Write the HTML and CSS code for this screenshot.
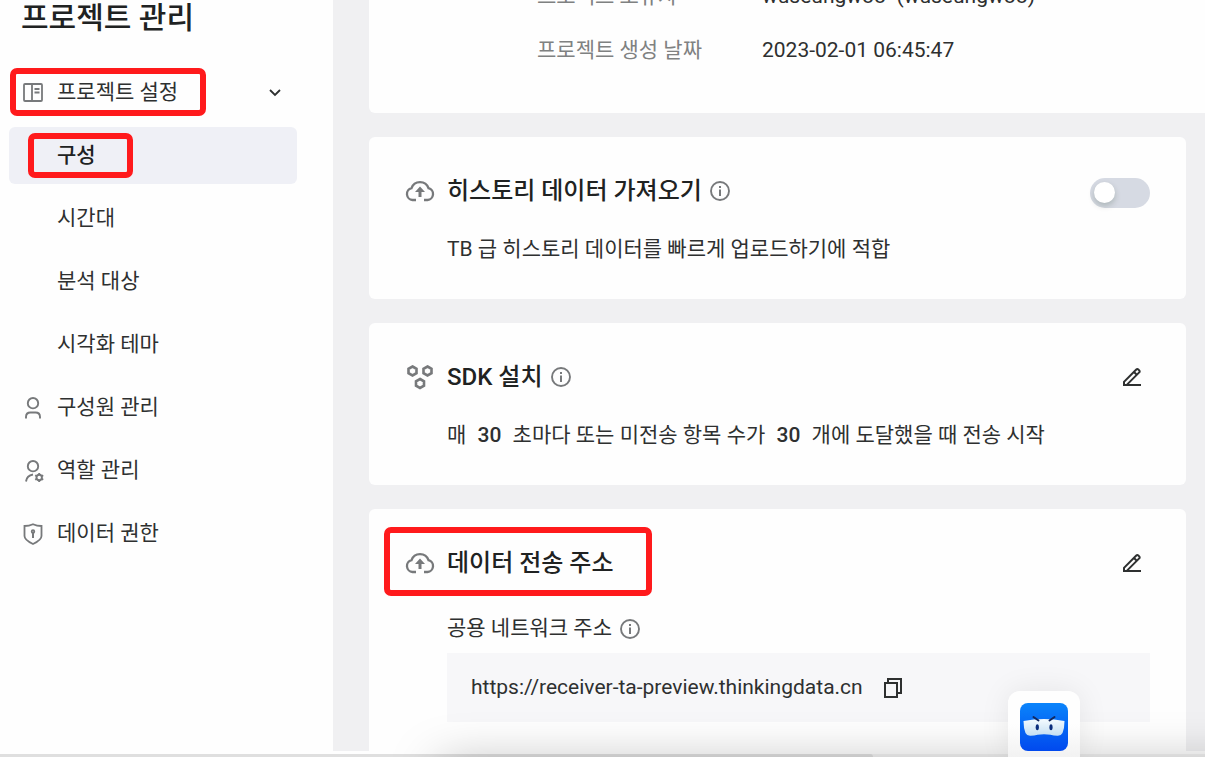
FILE: index.html
```
<!DOCTYPE html>
<html lang="ko">
<head>
    <meta charset="UTF-8">
    <meta name="viewport" content="width=device-width, initial-scale=1.0">
    <title>프로젝트 관리</title>
    <link rel="stylesheet" href="styles.css">
</head>
<body>

    <!-- Shared icons -->
    <svg class="icon-defs" width="0" height="0" aria-hidden="true">
        <symbol id="icon-cloud" viewBox="0 0 30 22">
            <path d="M11 20H7.500a6 6 0 0 1-1-11.800A9 9 0 0 1 23.500 8.200a6 6 0 0 1-1 11.800H19" fill="none" stroke="currentColor" stroke-width="2.300"/>
            <path d="M15 6.500l5 5.500h-3.500v5h-3v-5H10z" fill="currentColor"/>
        </symbol>
        <symbol id="icon-info" viewBox="0 0 20 20">
            <circle cx="10" cy="10" r="9" fill="none" stroke="currentColor" stroke-width="1.900"/>
            <path d="M9 5h2v2H9zM9 8.500h2V15H9z" fill="currentColor"/>
        </symbol>
        <symbol id="icon-edit" viewBox="0 0 20 20">
            <path d="M2 18v-3.200L14.300 2.500q1-1 2 0l.9.9q1 1 0 2L5 17.600M12 5l3 3" fill="none" stroke="currentColor" stroke-width="2"/>
            <path d="M1 17h18v2H1z" fill="currentColor"/>
        </symbol>
    </svg>

    <div class="layout">
        <!-- Sidebar -->
        <aside class="sidebar">
            <h1>프로젝트 관리</h1>
            <nav>
                <ul>
                    <li>
                        <a href="#" class="nav-item">
                            <svg class="nav-icon" viewBox="0 0 22 22" fill="none" stroke="currentColor" stroke-width="1.800"><rect x="2" y="2" width="18" height="17" rx="1"/><path d="M10 2v17M12.500 7h5M12.500 10.500h5"/></svg>
                            <span class="mark mark-settings">프로젝트 설정</span>
                            <svg class="chevron" viewBox="0 0 12 8"><path d="M1 1l5 5 5-5" fill="none" stroke="currentColor" stroke-width="1.800"/></svg>
                        </a>
                    </li>
                    <li><a href="#" class="nav-item sub active"><span class="mark mark-config">구성</span></a></li>
                    <li><a href="#" class="nav-item sub">시간대</a></li>
                    <li><a href="#" class="nav-item sub">분석 대상</a></li>
                    <li><a href="#" class="nav-item sub">시각화 테마</a></li>
                    <li>
                        <a href="#" class="nav-item">
                            <svg class="nav-icon" viewBox="0 0 22 22" fill="none" stroke="currentColor" stroke-width="1.900"><circle cx="11" cy="6.200" r="5.200"/><path d="M4 21.500v-1.500q0-4.500 4.500-4.500h5q4.500 0 4.500 4.500v1.500"/></svg>
                            구성원 관리
                        </a>
                    </li>
                    <li>
                        <a href="#" class="nav-item">
                            <svg class="nav-icon" viewBox="0 0 22 22" fill="none" stroke="currentColor" stroke-width="1.900"><circle cx="11" cy="6.200" r="5.200"/><path d="M4 21.500q.8-6 7-7"/><circle cx="17.200" cy="17.500" r="2.700"/><path d="M17.200 13v2M17.200 20v2M13.200 15.200l1.600 1M19.600 18.800l1.600 1M13.200 19.800l1.600-1M19.600 16.200l1.600-1"/></svg>
                            역할 관리
                        </a>
                    </li>
                    <li>
                        <a href="#" class="nav-item">
                            <svg class="nav-icon" viewBox="0 0 22 22" fill="none" stroke="currentColor" stroke-width="1.800"><path d="M2.500 3Q7 3 11 1.200 15 3 19.500 3v10q0 4-8.500 8Q2.500 17 2.500 13z"/><circle cx="11" cy="8.500" r="1.300"/><path d="M11 9v6" stroke-width="2"/></svg>
                            데이터 권한
                        </a>
                    </li>
                </ul>
            </nav>
        </aside>

        <!-- Main Content -->
        <main class="main-content">
            <section class="card info-card">
                <dl>
                    <dt>프로젝트 소유자</dt>
                    <dd>wuseungwoo&nbsp; (wuseungwoo)</dd>
                    <dt>프로젝트 생성 날짜</dt>
                    <dd>2023-02-01 06:45:47</dd>
                </dl>
            </section>

            <section class="card">
                <div class="card-head">
                    <svg class="card-icon"><use href="#icon-cloud"/></svg>
                    <h2><label for="history">히스토리 데이터 가져오기</label></h2>
                    <svg class="info"><use href="#icon-info"/></svg>
                    <input type="checkbox" id="history" class="switch" role="switch">
                </div>
                <p>TB 급 히스토리 데이터를 빠르게 업로드하기에 적합</p>
            </section>

            <section class="card">
                <div class="card-head">
                    <svg class="card-icon nodes" viewBox="0 0 30 26" fill="none" stroke="currentColor" stroke-width="2.600">
                        <path d="M7.500 2.500l4 2.300v4.400l-4 2.300-4-2.300V4.800zM22.500 2.500l4 2.300v4.400l-4 2.300-4-2.300V4.800zM15 15l4 2.300v4.400L15 24l-4-2.300v-4.400z"/>
                    </svg>
                    <h2>SDK 설치</h2>
                    <svg class="info"><use href="#icon-info"/></svg>
                    <button type="button" class="edit-btn" aria-label="SDK 설치 편집"><svg><use href="#icon-edit"/></svg></button>
                </div>
                <p>매 <b>30</b> 초마다 또는 미전송 항목 수가 <b>30</b> 개에 도달했을 때 전송 시작</p>
            </section>

            <section class="card address-card">
                <div class="card-head mark mark-address">
                    <svg class="card-icon"><use href="#icon-cloud"/></svg>
                    <h2>데이터 전송 주소</h2>
                    <button type="button" class="edit-btn" aria-label="데이터 전송 주소 편집"><svg><use href="#icon-edit"/></svg></button>
                </div>
                <p class="address-label">공용 네트워크 주소 <svg class="info"><use href="#icon-info"/></svg></p>
                <div class="address">
                    <span>https://receiver-ta-preview.thinkingdata.cn</span>
                    <button type="button" class="copy-btn" aria-label="복사">
                        <svg viewBox="0 0 20 22" fill="none" stroke="currentColor" stroke-width="2"><path d="M5 5V2h13v14h-4M2 6h12v14H2z"/></svg>
                    </button>
                </div>
            </section>
        </main>
    </div>

    <!-- Horizontal scrollbar -->
    <div class="scrollbar"><div class="thumb"></div></div>
    <div class="bottom-shadow"></div>

    <!-- Help assistant -->
    <button type="button" class="assistant" aria-label="도우미">
        <svg viewBox="0 0 48 48">
            <defs>
                <linearGradient id="bot-bg" x1="0" y1="0" x2="0" y2="1"><stop offset="0" stop-color="#0a84fb"/><stop offset="1" stop-color="#0149ee"/></linearGradient>
                <linearGradient id="bot-mask" x1="0" y1="0" x2="0" y2="1"><stop offset="0" stop-color="#f4fbff"/><stop offset="1" stop-color="#c3def2"/></linearGradient>
            </defs>
            <rect width="48" height="48" rx="8" fill="url(#bot-bg)"/>
            <path d="M3.500 18Q24 14 44.500 18q0 7-2 12-1.500 3-5 2.800-4 0-7-1-6.500-1.200-13 0-3 1-7 1-3.500.2-5-2.800-2-5-2-12z" fill="url(#bot-mask)"/>
            <path d="M13.500 14l5 3.500M34.500 14l-5 3.500" stroke="#12285e" stroke-width="2" stroke-linecap="round"/>
            <ellipse cx="17.300" cy="24.300" rx="1.600" ry="3" fill="#0a2d7c"/>
            <ellipse cx="31" cy="24.300" rx="1.600" ry="3" fill="#0a2d7c"/>
        </svg>
    </button>

</body>
</html>
```
FILE: styles.css
```
* {
    margin: 0;
    padding: 0;
    box-sizing: border-box;
}

body {
    display: flex;
    flex-direction: column;
    height: 100vh;
    overflow: hidden;
    background-color: #fefefe;
    color: #2e3030;
    font-family: Roboto, "Noto Sans CJK KR", sans-serif;
    font-size: 21px;
    line-height: 33px;
}

button {
    border: none;
    background: none;
    color: inherit;
    cursor: pointer;
}

svg {
    display: block;
    flex-shrink: 0;
}

.icon-defs {
    position: absolute;
}

.layout {
    display: flex;
    flex: 1;
    min-height: 0;
    margin-bottom: 3px;
}

/* Sidebar */
.sidebar {
    width: 333px;
    flex-shrink: 0;
    padding: 0 36px 0 9px;
}

.sidebar h1 {
    padding-left: 12px;
    margin-bottom: 28px;
    font-size: 30px;
    font-weight: 500;
    line-height: 36px;
    color: #202222;
}

.sidebar ul {
    display: flex;
    flex-direction: column;
    gap: 6px;
    list-style: none;
}

.nav-item {
    display: flex;
    align-items: center;
    gap: 13px;
    height: 57px;
    padding: 0 16px 0 13px;
    border-radius: 6px;
    color: inherit;
    text-decoration: none;
}

.nav-item.sub {
    padding-left: 48px;
}

.nav-item.active {
    background-color: #eff0f6;
    color: #202222;
    font-weight: 500;
}

.nav-icon {
    width: 22px;
    height: 22px;
    color: #77797b;
}

.chevron {
    width: 12px;
    height: 8px;
    margin-left: auto;
}

/* Red highlight frames */
.mark {
    position: relative;
}

.mark::after {
    content: "";
    position: absolute;
    box-sizing: border-box;
    border: 6px solid #ff1a1c;
    border-radius: 7px;
    pointer-events: none;
}

.mark-settings::after {
    inset: -8px -28px -7px -47px;
}

.mark-config::after {
    inset: -6px -37px -6px -29px;
}

.mark-address::after {
    top: -18px;
    bottom: -15px;
    left: -21px;
    width: 268px;
}

/* Main Content */
.main-content {
    display: flex;
    flex: 1;
    flex-direction: column;
    gap: 24px;
    min-width: 0;
    padding: 0 19px 0 36px;
    overflow: hidden;
    background-color: #f0f0f2;
}

.card {
    flex-shrink: 0;
    padding: 36px 36px 33px;
    border-radius: 6px;
    background-color: #fefefe;
}

.card p {
    margin: 24px 0 0 42px;
}

.card b {
    margin: 0 6px;
    font-weight: 500;
}

.info-card {
    margin: -20px -19px 0 0;
    padding: 0 36px 46px 168px;
    border-radius: 0 0 0 6px;
}

.info-card dl {
    display: grid;
    grid-template-columns: 225px 1fr;
    row-gap: 21px;
}

.info-card dt {
    color: #7f8181;
}

.card-head {
    display: flex;
    align-items: center;
    height: 36px;
}

.card-head h2 {
    margin: 0 8px 0 12px;
    font-size: 24px;
    font-weight: 500;
    color: #202222;
}

.card-icon {
    width: 30px;
    height: 22px;
    color: #77797b;
}

.card-icon.nodes {
    height: 26px;
}

.info {
    width: 20px;
    height: 20px;
    color: #77797b;
}

.switch {
    appearance: none;
    width: 60px;
    height: 30px;
    margin: 4px 0 0 auto;
    padding: 4px;
    border-radius: 15px;
    background-color: #d6dae3;
    cursor: pointer;
}

.switch::before {
    content: "";
    display: block;
    width: 21px;
    height: 21px;
    border-radius: 50%;
    background-color: white;
    box-shadow: 0 3px 6px rgba(0, 35, 11, 0.2);
}

.switch:checked {
    background-color: #0a6cf5;
}

.switch:checked::before {
    margin-left: 31px;
}

.edit-btn {
    margin: 0 8px 0 auto;
}

.edit-btn svg {
    width: 20px;
    height: 20px;
}

.address-card {
    padding-bottom: 60px;
}

.card .address-label {
    display: flex;
    align-items: center;
    gap: 8px;
    margin: 31px 0 8px 42px;
}

.address {
    display: flex;
    align-items: center;
    gap: 20px;
    height: 69px;
    margin-left: 42px;
    padding: 0 24px;
    background-color: #f7f7f9;
}

.copy-btn svg {
    width: 20px;
    height: 22px;
}

/* Bottom edge */
.scrollbar {
    height: 3px;
    background-color: #f2f2f2;
}

.thumb {
    width: 873px;
    max-width: 80%;
    height: 3px;
    border-radius: 0 3px 0 0;
    background-color: #dfdfdf;
}

.bottom-shadow {
    position: fixed;
    right: -60px;
    bottom: -40px;
    left: 440px;
    height: 30px;
    box-shadow: 0 0 50px rgba(0, 0, 0, 0.35);
    pointer-events: none;
}

.assistant {
    position: fixed;
    right: 125px;
    bottom: 0;
    width: 72px;
    height: 66px;
    padding: 12px 12px 6px;
    border-radius: 12px 12px 0 0;
    background: linear-gradient(#fefefe 50%, #f2f2f2);
    box-shadow: 0 0 30px rgba(0, 0, 0, 0.08);
}

.assistant svg {
    width: 48px;
    height: 48px;
}
```
